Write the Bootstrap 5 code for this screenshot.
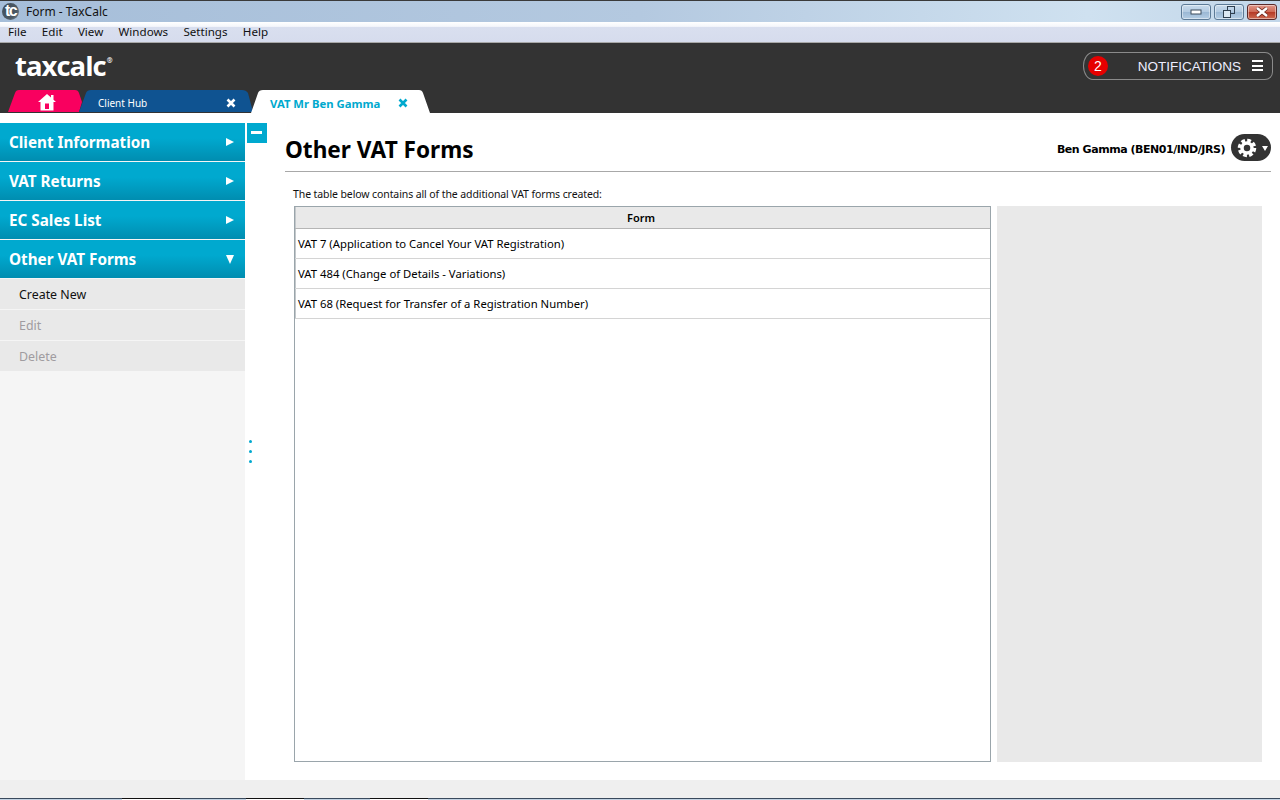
<!DOCTYPE html>
<html lang="en">
<head>
<meta charset="UTF-8">
<meta name="viewport" content="width=device-width, initial-scale=1.0">
<title>Form - TaxCalc</title>
<link href="https://cdn.jsdelivr.net/npm/bootstrap@5.3.0/dist/css/bootstrap.min.css" rel="stylesheet">
<style>
  html, body { height: 800px; overflow: hidden; }
  body { font-family: "Noto Sans", sans-serif; background: #fff; color: #000; font-size: 12px; }
  .app-shell { height: 800px; }

  .win-title { height: 22px; border-top: 1px solid #3a3a3a; font-size: 12px; color: #111;
    background: linear-gradient(90deg, #a6bed9 0%, #b4c9e0 50%, #cfe1f0 85%, #c2d6e9 100%); }
  .tc-icon { width: 17px; height: 17px; margin: 0 7px 0 2px; border-radius: 50%; color: #fff; overflow: hidden;
    background: radial-gradient(circle at 35% 40%, #3f4c58 0%, #4c5a66 60%, #8a98a6 100%);
    font: bold 16px/15px "Liberation Sans", sans-serif; letter-spacing: -1.5px; text-align: center; }
  .win-ctrls { gap: 3px; padding-right: 3px; }
  .win-btn { width: 30px; height: 16px; border: 1px solid #5c7a96; border-radius: 3px; box-shadow: inset 0 0 0 1px rgba(255,255,255,.45);
    background: linear-gradient(#c9dbec 0%, #b3cbe2 48%, #9bb8d4 52%, #b4cde4 100%); }
  .win-btn.is-close { background: linear-gradient(#e0978a 0%, #cf6a55 48%, #b53a26 52%, #cd6a50 100%); border-color: #5a2a2a; }
  .win-menu { height: 21px; font-size: 11.6px; color: #111; padding-left: 8px; gap: 15.3px; border-bottom: 1px solid #a8a8a8;
    background: linear-gradient(#fff 0%, #f4f6fb 22%, #d9dfef 27%, #d6dced 100%); }

  .app-head { height: 70px; background: #333; }
  .logo-text { left: 15px; top: 5px; color: #fff; font: bold 27.5px/36px "Open Sans", sans-serif; letter-spacing: -1px; }
  .logo-text sup { font-size: 7px; top: -13px; letter-spacing: 0; margin-left: 1px; }
  .notif-pill { right: 7px; top: 9px; width: 190px; height: 28px; border: 1px solid #8b8b8b; border-radius: 10px 8px 8px 10px / 14px 8px 8px 14px;
    color: #eef; font: 13.5px/28px "Liberation Sans", sans-serif; }
  .notif-count { left: 4px; top: 3px; width: 20px; height: 20px; border-radius: 50%; background: #e60000; color: #fff; text-align: center; line-height: 20px; font-size: 14px; }
  .notif-label { right: 31px; top: 0; }
  .burger { right: 9px; top: 7px; width: 11px; height: 11px; border-top: 2px solid #fff; border-bottom: 2px solid #fff; }
  .burger::before { content: ""; display: block; height: 2px; margin-top: 2.5px; background: #fff; }

  .tab-strip { left: 0; bottom: 0; height: 23px; width: 440px; }
  .tab-shape { top: 0; height: 22px; }
  .tab-home { left: 8px; width: 75px; background: #f9005f; clip-path: path("M0 22 L7 3 Q8 0 11 0 L67 0 Q70 0 71 3 L74 12 L71 22 Z"); }
  .tab-hub { left: 79px; width: 175px; background: #0f5391; color: #fff; line-height: 27px;
    clip-path: path("M0 22 L7 3 Q8 0 12 0 L163 0 Q167 0 169 3 L174 22 Z"); }
  .tab-active { left: 251px; width: 180px; height: 23px; background: #fff; color: #00a9ce; font-size: 11.3px; font-weight: 700; line-height: 27px;
    clip-path: path("M0 23 L7 3 Q8 0 12 0 L168 0 Q171 0 172 3 L179 23 Z"); }
  .tab-label { left: 19px; top: 0; }
  .tab-hub .tab-label { font-size: 10px; }
  .tab-x { top: 8px; width: 10px; height: 10px; }
  .tab-home svg { left: 30px; top: 4px; }

  .main-area { height: 667px; }
  .side-col { width: 245px; padding-top: 10px; background: linear-gradient(#fff 10px, #f5f5f5 10px); }
  .side-head { height: 38px; margin-bottom: 1px; padding: 0 9px; color: #fff; font-size: 15.25px; font-weight: 700;
    background: linear-gradient(#00a9cf 0%, #00a9cf 40%, #008db0 100%); }
  .side-item { height: 30px; margin-bottom: 1px; padding: 3px 19px 0; background: #e9e9e9; color: #111; font-size: 12.4px; }
  .side-item.is-off { color: #a09ca0; }
  .arrow-right { width: 0; height: 0; border-left: 8px solid #fff; border-top: 4px solid transparent; border-bottom: 4px solid transparent; margin-right: 2px; }
  .arrow-down { width: 0; height: 0; border-top: 9px solid #fff; border-left: 4.5px solid transparent; border-right: 4.5px solid transparent; margin-right: 2px; }

  .split-col { width: 40px; }
  .collapse-btn { left: 2px; top: 10px; width: 20px; height: 20px; background: #00a9cf; }
  .collapse-btn::after { content: ""; position: absolute; left: 4px; top: 8px; width: 11px; height: 3px; background: #fff; }
  .grip-dot { left: 4px; width: 3px; height: 3px; border-radius: 50%; background: #00a9cf; }

  .form-col { width: 986px; padding-top: 10px; }
  .form-head { height: 49px; border-bottom: 1px solid #a8a8a8; }
  .form-title { font-size: 22.6px; font-weight: 700; margin: 6px 0 0; line-height: 32px; }
  .client-name { font: 700 11px "DejaVu Sans", sans-serif; letter-spacing: -.46px; margin-right: 6px; padding-top: 5px; }
  .gear-btn { width: 40px; height: 27px; border-radius: 14px; background: #333; margin-top: 1px; }
  .gear-caret { right: 3px; top: 12px; width: 0; height: 0; border-top: 5px solid #fff; border-left: 3px solid transparent; border-right: 3px solid transparent; }
  .intro-line { margin: 14px 0 4px 8px; font-size: 10.5px; letter-spacing: -.1px; line-height: 16px; color: #111; }
  .forms-wrap { gap: 6px; margin-left: 9px; height: 556px; }
  .forms-box { width: 697px; height: 556px; border: 1px solid #9aa5ab; }
  .forms-table { font-size: 11.3px; }
  .forms-table th { height: 21px; padding: 1px 4px 0 0; background: #e9e9e9; text-align: center; font-size: 11px; font-weight: 600; border-bottom: 1px solid #b5b5b5; border-left: 1px solid #c4c8cb; line-height: 20px; }
  .forms-table td { height: 30px; padding: 1px 0 0 2px; border-bottom: 1px solid #d4d4d4; border-left: 1px solid #c4c8cb; }
  .side-panel { width: 265px; background: #e9e9e9; }

  .foot-bar { height: 18px; background: #efefef; }
  .task-strip { height: 2px; }
  .task-part { border-top: 1px solid #3a4a5c; background: #c2d2e2; }
  .task-open { width: 58px; border-top: 1px solid #111; background: #fff; }
</style>
</head>
<body>
<div class="app-shell d-flex flex-column">

  <div class="win-title d-flex align-items-center position-relative">
    <div class="tc-icon">tc</div>
    <span>Form - TaxCalc</span>
    <div class="ms-auto d-flex win-ctrls">
      <div class="win-btn d-flex align-items-center justify-content-center">
        <svg width="12" height="6"><rect x="1" y="1" width="10" height="4" fill="#fff" stroke="#3c4c5c"/></svg>
      </div>
      <div class="win-btn d-flex align-items-center justify-content-center">
        <svg width="14" height="12"><rect x="5.5" y=".5" width="7" height="7" fill="none" stroke="#2f3f4f"/><rect x="1.5" y="4.5" width="7" height="7" fill="#dce8f2" stroke="#2f3f4f"/></svg>
      </div>
      <div class="win-btn is-close d-flex align-items-center justify-content-center">
        <svg width="14" height="10"><path d="M2 1 L12 9 M12 1 L2 9" stroke="#6a2a20" stroke-width="4"/><path d="M2 1 L12 9 M12 1 L2 9" stroke="#fff" stroke-width="2.500"/></svg>
      </div>
    </div>
  </div>

  <div class="win-menu d-flex align-items-center">
    <span>File</span><span>Edit</span><span>View</span><span>Windows</span><span>Settings</span><span>Help</span>
  </div>

  <header class="app-head position-relative">
    <div class="logo-text position-absolute">taxcalc<sup>®</sup></div>
    <div class="notif-pill position-absolute">
      <span class="notif-count position-absolute">2</span>
      <span class="notif-label position-absolute">NOTIFICATIONS</span>
      <span class="burger position-absolute"></span>
    </div>
    <div class="tab-strip position-absolute">
      <div class="tab-shape tab-home position-absolute">
        <svg class="position-absolute" width="18" height="17" viewBox="0 0 18 17"><path fill-rule="evenodd" d="M9 0 L13 3.500 L13 1 L15.500 1 L15.500 5.700 L18 8 L15.500 8 L15.500 16.500 L2.500 16.500 L2.500 8 L0 8 Z M7 9.500 L7 15 L11 15 L11 9.500 Z" fill="#fff"/></svg>
      </div>
      <div class="tab-shape tab-hub position-absolute">
        <span class="tab-label position-absolute">Client Hub</span>
        <svg class="tab-x position-absolute" style="left:147px" viewBox="0 0 10 10"><path d="M1.500 1.500 L8.500 8.500 M8.500 1.500 L1.500 8.500" stroke="#fff" stroke-width="2.600"/></svg>
      </div>
      <div class="tab-shape tab-active position-absolute">
        <span class="tab-label position-absolute">VAT Mr Ben Gamma</span>
        <svg class="tab-x position-absolute" style="left:147px" viewBox="0 0 10 10"><path d="M1.500 1.500 L8.500 8.500 M8.500 1.500 L1.500 8.500" stroke="#00a9ce" stroke-width="2.600"/></svg>
      </div>
    </div>
  </header>

  <div class="main-area d-flex">
    <aside class="side-col d-flex flex-column">
      <div class="side-head d-flex align-items-center justify-content-between"><span>Client Information</span><i class="arrow-right"></i></div>
      <div class="side-head d-flex align-items-center justify-content-between"><span>VAT Returns</span><i class="arrow-right"></i></div>
      <div class="side-head d-flex align-items-center justify-content-between"><span>EC Sales List</span><i class="arrow-right"></i></div>
      <div class="side-head d-flex align-items-center justify-content-between"><span>Other VAT Forms</span><i class="arrow-down"></i></div>
      <div class="side-item d-flex align-items-center">Create New</div>
      <div class="side-item is-off d-flex align-items-center">Edit</div>
      <div class="side-item is-off d-flex align-items-center">Delete</div>
    </aside>

    <div class="split-col position-relative">
      <div class="collapse-btn position-absolute"></div>
      <div class="grip-dot position-absolute" style="top:327px"></div>
      <div class="grip-dot position-absolute" style="top:337px"></div>
      <div class="grip-dot position-absolute" style="top:347px"></div>
    </div>

    <section class="form-col">
      <div class="form-head d-flex justify-content-between align-items-center">
        <h1 class="form-title">Other VAT Forms</h1>
        <div class="d-flex align-items-center">
          <span class="client-name">Ben Gamma (BEN01/IND/JRS)</span>
          <div class="gear-btn position-relative d-flex align-items-center ps-1">
            <svg width="24" height="24" viewBox="0 0 24 24"><circle cx="12" cy="12" r="7.500" fill="none" stroke="#fff" stroke-width="3.500" stroke-dasharray="3.700 2.190"/><circle cx="12" cy="12" r="5" fill="none" stroke="#fff" stroke-width="3.500"/></svg>
            <span class="gear-caret position-absolute"></span>
          </div>
        </div>
      </div>
      <p class="intro-line">The table below contains all of the additional VAT forms created:</p>
      <div class="forms-wrap d-flex">
        <div class="forms-box">
          <table class="forms-table w-100">
            <thead><tr><th>Form</th></tr></thead>
            <tbody>
              <tr><td>VAT 7 (Application to Cancel Your VAT Registration)</td></tr>
              <tr><td>VAT 484 (Change of Details - Variations)</td></tr>
              <tr><td>VAT 68 (Request for Transfer of a Registration Number)</td></tr>
            </tbody>
          </table>
        </div>
        <div class="side-panel"></div>
      </div>
    </section>
  </div>

  <div class="foot-bar"></div>
  <div class="task-strip d-flex">
    <div class="task-part" style="width:122px"></div><div class="task-open"></div>
    <div class="task-part" style="width:66px"></div><div class="task-open"></div>
    <div class="task-part" style="width:66px"></div><div class="task-open"></div>
    <div class="task-part flex-grow-1"></div>
  </div>
</div>
<script src="https://cdn.jsdelivr.net/npm/bootstrap@5.3.0/dist/js/bootstrap.bundle.min.js"></script>
</body>
</html>
